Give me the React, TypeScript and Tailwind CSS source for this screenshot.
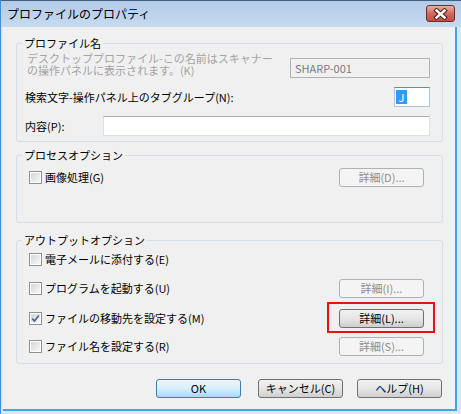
import React from "react";

// Win7 style property dialog

function CheckBox({ checked = false }: { checked?: boolean }) {
  return (
    <div className="w-[13px] h-[13px] shrink-0 border border-[#8e8f8f] bg-white p-[1px]">
      <div className="w-full h-full bg-gradient-to-br from-[#d6d6d6] to-[#f7f7f7] flex items-center justify-center">
        {checked && (
          <svg width="9" height="9" viewBox="0 0 9 9">
            <path d="M1.2 4.6 L3.5 7 L7.8 1.4" fill="none" stroke="#4a5d98" strokeWidth="1.6" />
          </svg>
        )}
      </div>
    </div>
  );
}

function Btn({
  label,
  disabled = false,
  primary = false,
  className = "",
}: {
  label: string;
  disabled?: boolean;
  primary?: boolean;
  className?: string;
}) {
  const look = disabled
    ? "border-[#adb2b5] bg-[#f4f4f4] text-[#8d8d8d]"
    : primary
    ? "border-[#3c7fb1] bg-gradient-to-b from-[#eaf6fd] via-[#d9f0fc] to-[#a7d9f5] text-black"
    : "border-[#707070] bg-gradient-to-b from-[#f2f2f2] via-[#e6e6e6] to-[#cfcfcf] text-black";
  return (
    <div
      className={`w-[85px] h-[19px] shrink-0 rounded-[3px] border flex items-center justify-center text-[11px] leading-none ${look} ${className}`}
    >
      {label}
    </div>
  );
}

function Group({
  title,
  className = "",
  bodyClass = "",
  children,
}: {
  title: string;
  className?: string;
  bodyClass?: string;
  children: React.ReactNode;
}) {
  return (
    <fieldset className={`mr-[12px] ml-[13px] border border-[#d5dfe5] rounded-[3px] ${className}`}>
      <legend className="ml-[5px] px-[2px] h-[14px] leading-[14px] text-[11px] text-black">{title}</legend>
      <div className={bodyClass}>{children}</div>
    </fieldset>
  );
}

function OptionRow({
  label,
  checked = false,
  button,
  className = "",
}: {
  label: string;
  checked?: boolean;
  button?: React.ReactNode;
  className?: string;
}) {
  return (
    <div className={`h-[19px] flex items-center justify-between ${className}`}>
      <div className="flex items-center gap-[3px]">
        <CheckBox checked={checked} />
        <span className="text-[11px] leading-none text-black">{label}</span>
      </div>
      {button}
    </div>
  );
}

export default function App() {
  return (
    <div className="w-[461px] h-[414px] flex flex-col bg-[#d8e6f5] border-l border-[#3f8fd2] font-['Noto_Sans_CJK_JP',sans-serif] overflow-hidden">
      {/* Title bar */}
      <div className="h-[27px] shrink-0 flex items-start justify-between border-t border-[#44607f] bg-gradient-to-b from-[#b3cbe7] to-[#c7daf0]">
        <span className="ml-[6px] mt-[5px] text-[12px] leading-[16px] text-black">プロファイルのプロパティ</span>
        <div className="mt-[4px] mr-[6px] w-[29px] h-[17px] rounded-[3px] border border-[#6e2b26] bg-gradient-to-b from-[#e6b0a6] via-[#d2695d] to-[#c44d40] flex items-center justify-center">
          <svg width="15" height="12" viewBox="0 0 15 12">
            <path d="M3.5 2.5 L11.5 9.5 M11.5 2.5 L3.5 9.5" stroke="#4a1f1b" strokeWidth="4.4" strokeLinecap="square" />
            <path d="M3.5 2.5 L11.5 9.5 M11.5 2.5 L3.5 9.5" stroke="#ffffff" strokeWidth="2.4" strokeLinecap="square" />
          </svg>
        </div>
      </div>

      {/* Body */}
      <div className="flex-1 ml-[2px] mr-[4px] mb-[3px] bg-[#f0f0f0] border-r-2 border-b-2 border-[#3aa9e0] box-content flex flex-col">
        <Group title="プロファイル名" className="mt-[9px]" bodyClass="pl-[8px] pr-[12px] pt-[2px] pb-[5px]">
          <div className="flex items-start justify-between">
            <p className="ml-[2px] text-[11px] leading-[12px] text-[#a3a3a3]">
              デスクトッププロファイル-この名前はスキャナー
              <br />
              の操作パネルに表示されます。(K)
            </p>
            <div className="mt-[6px] w-[140px] h-[20px] border border-[#adb2b5] bg-[#f0f0f0] flex items-center pl-[4px] text-[11px] text-[#7a7a7a]">
              SHARP-001
            </div>
          </div>
          <div className="mt-[9px] h-[20px] flex items-center justify-between">
            <span className="text-[11px] leading-none text-black">検索文字-操作パネル上のタブグループ(N):</span>
            <div className="w-[36px] h-[20px] border border-[#a9c8e4] border-t-[#5b8dc3] bg-white flex items-center pl-[1px]">
              <span className="h-[14px] w-[11px] bg-[#3399ff] text-white text-[11px] leading-[14px] text-center">J</span>
            </div>
          </div>
          <div className="mt-[9px] h-[20px] flex items-center">
            <span className="w-[78px] shrink-0 text-[11px] leading-none text-black">内容(P):</span>
            <div className="flex-1 h-[20px] border border-[#dbdfe6] border-t-[#abadb3] bg-white" />
          </div>
        </Group>

        <Group title="プロセスオプション" className="mt-[6px]" bodyClass="pl-[12px] pr-[18px] pt-[6px] pb-[35px]">
          <OptionRow label="画像処理(G)" button={<Btn label="詳細(D)..." disabled />} />
        </Group>

        <Group title="アウトプットオプション" className="mt-[10px]" bodyClass="pl-[12px] pr-[18px] pt-[3px] pb-[7px]">
          <OptionRow label="電子メールに添付する(E)" />
          <OptionRow className="mt-[10px]" label="プログラムを起動する(U)" button={<Btn label="詳細(I)..." disabled />} />
          <OptionRow
            className="mt-[11px]"
            label="ファイルの移動先を設定する(M)"
            checked
            button={
              <div className="relative">
                <Btn label="詳細(L)..." />
                <div className="absolute -left-[12px] -right-[11px] -top-[7px] -bottom-[5px] border-2 border-[#e8130f]" />
              </div>
            }
          />
          <OptionRow className="mt-[9px]" label="ファイル名を設定する(R)" button={<Btn label="詳細(S)..." disabled />} />
        </Group>

        <div className="mt-[15px] mr-[13px] flex justify-end">
          <Btn label="OK" primary />
          <Btn label="キャンセル(C)" className="ml-[17px]" />
          <Btn label="ヘルプ(H)" className="ml-[14px]" />
        </div>
      </div>
    </div>
  );
}
